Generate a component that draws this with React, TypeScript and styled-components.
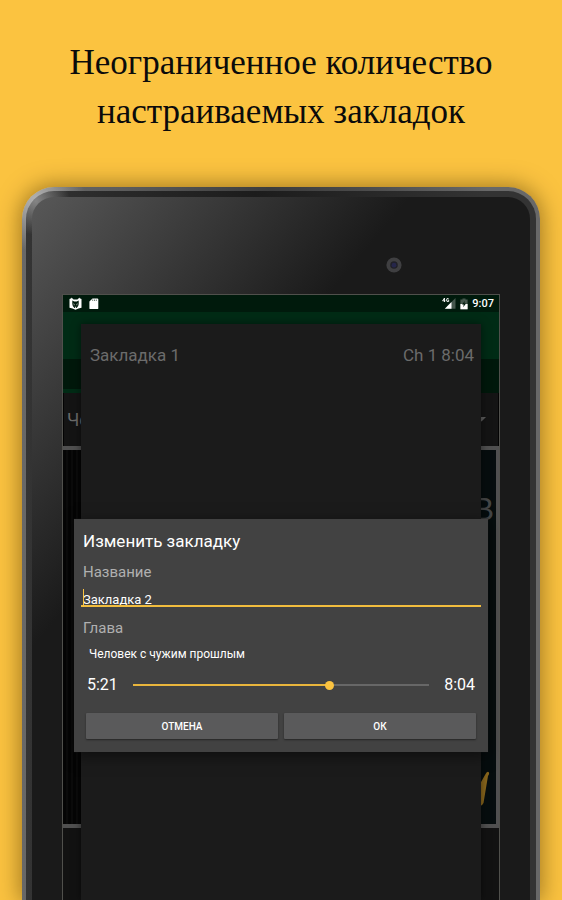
import React, { useState } from "react";
import styled, { createGlobalStyle } from "styled-components";

const GlobalStyle = createGlobalStyle`
  *, *::before, *::after { box-sizing: border-box; }
  body { margin: 0; background: #fbc340; }
  button, input, select { font-family: inherit; margin: 0; }
`;

const Page = styled.main`
  display: flex;
  flex-direction: column;
  min-height: 100vh;
  overflow: hidden;
  background: #fbc340;
  font-family: Roboto, "Noto Sans", sans-serif;
`;

const Headline = styled.h1`
  margin: 0;
  padding: 38px 24px 50px;
  color: #0b0b0b;
  font: 400 35px/49px "Liberation Serif", "Times New Roman", serif;
  text-align: center;

  span { display: block; }
`;

const Device = styled.section`
  flex: 1;
  display: flex;
  margin: 1px 22px 0;
  padding: 4px 4px 0;
  border-radius: 32px 32px 0 0;
  background:
    radial-gradient(circle at 14px 14px, #b4b4b4 0, rgba(150, 150, 150, 0) 50px),
    linear-gradient(to right, #686868 0, #5c5c5c 100px, #3c3c3c 48%, #4a4a4a 65%, #686868 90%);
  box-shadow: 0 0 22px 2px rgba(70, 45, 0, 0.5);
`;

const Rim = styled.div`
  flex: 1;
  display: flex;
  padding: 6px 6px 0;
  border-radius: 28px 28px 0 0;
  background:
    radial-gradient(circle at 10px 10px, #858585 0, rgba(80, 80, 80, 0) 34px),
    linear-gradient(to right, #343434 0, #2a2a2a 80px, #1c1c1c 45%, #333 90%);
`;

const Face = styled.div`
  flex: 1;
  display: flex;
  flex-direction: column;
  padding: 0 30px;
  border-radius: 22px 22px 0 0;
  background: linear-gradient(130deg, #585858 0, #1a1a1a 290px);
`;

const CameraStrip = styled.div`
  display: flex;
  align-items: center;
  height: 97px;
  padding: 38px 0 0 74%;
`;

const Screen = styled.div`
  flex: 1;
  position: relative;
  display: flex;
  flex-direction: column;
  overflow: hidden;
  min-height: 606px;
  border: 1px solid #50504c;
  border-bottom: 0;
  background: #121212;
`;

const StatusBar = styled.div`
  display: flex;
  align-items: center;
  justify-content: space-between;
  height: 17px;
  padding: 0 5px 0 6px;
  background: #001a0c;
  color: #fff;
  font-size: 11px;
  line-height: 17px;
  font-weight: 500;
`;

const StatusGroup = styled.div<{ $gap: number }>`
  display: flex;
  align-items: center;
  gap: ${(p) => p.$gap}px;
`;

const Spacer = styled.span`
  flex: 1;
`;

const AppBar = styled.div`
  height: 47px;
  background: #002b15;
`;

const TabBar = styled.div`
  height: 34px;
  background: linear-gradient(to right, #002b15 50%, transparent 50%) bottom / 100% 4px no-repeat #00180b;
`;

const ChapterPicker = styled.button`
  display: flex;
  align-items: center;
  justify-content: space-between;
  height: 53px;
  padding: 0 12px 0 3px;
  border: solid #030303;
  border-width: 0 1px;
  background: #141414;
  color: #6a6a6a;
  font-size: 18px;
`;

const Cover = styled.div`
  display: flex;
  height: 382px;
  border: solid #505050;
  border-width: 4px 3px 4px 0;
`;

const CoverSpine = styled.div`
  width: 40px;
  background: repeating-linear-gradient(to right, #050505 0 3px, #0b0b0b 3px 5px);
`;

const CoverArt = styled.div`
  flex: 1;
  display: flex;
  flex-direction: column;
  justify-content: space-between;
  align-items: flex-end;
  padding: 40px 2px 16px 0;
  background: #060d0e;
  color: #444647;
  font: 32px/38px "Liberation Sans", sans-serif;
`;

const BookmarkPanel = styled.section`
  position: absolute;
  inset: 29px 18px 0;
  padding: 19px 7px 0 9px;
  background: #1b1b1b;
  box-shadow: 0 0 8px rgba(0, 0, 0, 0.5);
`;

const BookmarkRow = styled.div`
  display: flex;
  color: #6b6b6b;
  font-size: 17px;
  line-height: 24px;
`;

const BookmarkTime = styled.span`
  margin-left: 4px;
`;

const Dialog = styled.form`
  position: absolute;
  inset: 224px 11px auto;
  padding: 9px 7px 13px;
  background: #424242;
  color: #fff;
  box-shadow: 0 4px 14px rgba(0, 0, 0, 0.5), 0 0 1px #222;
`;

const DialogTitle = styled.h2`
  margin: 0 2px 8px;
  font-size: 17px;
  line-height: 26px;
  font-weight: 400;
`;

const FieldLabel = styled.label`
  display: block;
  margin: 0 2px;
  color: #b0b0b0;
  font-size: 15px;
  line-height: 20px;
`;

const NameField = styled.div`
  position: relative;
  display: flex;
  margin: 7px 0 11px;

  &::before {
    content: "";
    position: absolute;
    left: 2px;
    top: 0;
    width: 1px;
    height: 18px;
    background: #fbc340;
  }
`;

const NameInput = styled.input`
  flex: 1;
  min-width: 0;
  height: 18px;
  padding: 4px 2px 0;
  border: 0;
  border-bottom: 2px solid #f2bd3e;
  outline: 0;
  background: transparent;
  color: #fff;
  font-size: 13px;
  line-height: 14px;
`;

const ChapterSelect = styled.select`
  display: block;
  width: 100%;
  height: 18px;
  margin: 7px 0 12px;
  padding: 0 8px;
  border: 0;
  outline: 0;
  appearance: none;
  background: transparent;
  color: #fff;
  font-size: 12px;
  line-height: 18px;
`;

const SeekRow = styled.div`
  display: flex;
  align-items: center;
  gap: 11px;
  height: 20px;
  padding: 0 6px;
  font-size: 16px;
  line-height: 20px;
`;

const Seek = styled.input`
  --fill: 0%;
  flex: 1;
  min-width: 0;
  height: 10px;
  appearance: none;
  outline: 0;
  background: linear-gradient(to right, #e9b53c var(--fill), #676767 var(--fill)) center / calc(100% - 8px) 2px no-repeat;

  &::-webkit-slider-thumb {
    appearance: none;
    width: 9px;
    height: 9px;
    border-radius: 50%;
    background: #fbc340;
  }
`;

const Actions = styled.div`
  display: grid;
  grid-template-columns: 1fr 1fr;
  gap: 6px;
  padding: 0 5px;
  margin-top: 18px;
`;

const ActionButton = styled.button`
  height: 26px;
  padding: 0;
  border: 0;
  border-radius: 1px;
  background: #5a5a5b;
  box-shadow: 0 1px 2px rgba(0, 0, 0, 0.45);
  color: #fff;
  font-size: 10px;
  font-weight: 500;
`;

const Camera = () => (
  <svg width="16" height="16" viewBox="0 0 16 16" aria-hidden="true">
    <circle cx="8" cy="8" r="7.6" fill="#3f3f41" />
    <circle cx="8" cy="8" r="3.8" fill="#202027" />
    <circle cx="8" cy="8.2" r="2.4" fill="#25264a" />
  </svg>
);

const BookIcon = () => (
  <svg width="13" height="13" viewBox="0 0 13 13" aria-hidden="true">
    <path d="M.5 2 2.400 1.200V.5L4.600 2.500H8.400L10.600.5V1.200L12.500 2V10.800L9.500 11.500 6.500 12.700 3.500 11.500.5 10.800Z" fill="#fff" />
    <path d="M3.300 3.600 5.200 4.400H7.800L9.700 3.600V7L9.200 9 7.600 11H5.400L3.800 9 3.300 7Z" fill="#001a0c" />
    <path d="M4.300 6 5.700 7.300 5 9ZM8.700 6 7.300 7.300 8 9Z" fill="#aab5ae" />
    <path d="M5.600 9.800H7.400L6.500 11.200Z" fill="#fff" />
  </svg>
);

const SdCardIcon = () => (
  <svg width="10" height="12" viewBox="0 0 10 12" aria-hidden="true">
    <path d="M3.500.5H8.400Q9.300.5 9.300 1.400V10.200Q9.300 11.100 8.400 11.100H1.300Q.4 11.100.4 10.200V3.600Z" fill="#fff" />
    <path d="M3.700 1.500V3M5.500 1.500V3M7.300 1.500V3" stroke="#4c5e54" strokeWidth=".8" />
  </svg>
);

const SignalIcon = () => (
  <svg width="14" height="13" viewBox="0 0 14 13" aria-hidden="true">
    <path d="M13.500 1V11.700H2.800Z" fill="#45574d" />
    <path d="M9.500 5V11.700H2.800Z" fill="#fff" />
    <path d="M2.500 1 .6 3.800H3.400M2.500 1V5M6.700 1.800Q4.500.6 4.500 3T6.700 4.500V3.200H5.700" fill="none" stroke="#fff" strokeWidth=".9" />
  </svg>
);

const BatteryIcon = () => (
  <svg width="8" height="12" viewBox="0 0 8 12" aria-hidden="true">
    <path d="M2.500.5H5.500V1.500H7.600V11.300H.4V1.500H2.500Z" fill="#45574d" />
    <path d="M.4 6H7.600V11.300H.4Z" fill="#fff" />
    <path d="M4.800 3 2 6.600H3.700L3.200 9.200 6 5.600H4.300Z" fill="#001a0c" />
  </svg>
);

const Caret = () => (
  <svg width="9" height="5" viewBox="0 0 9 5" aria-hidden="true">
    <path d="M0 0H9L4.500 4.500Z" fill="#5c5c5c" />
  </svg>
);

const BrushStroke = () => (
  <svg width="34" height="38" viewBox="0 0 34 38" aria-hidden="true">
    <path d="M6 34 10 12Q11 8 14 9L12 28 25 5Q27 1 28.500 2T28 6L23.500 33Q21.500 37 19 35L21 20 12 33Q8 37 6 34Z" fill="#8a671c" />
  </svg>
);

const formatTime = (s: number) => `${Math.floor(s / 60)}:${String(s % 60).padStart(2, "0")}`;

const DURATION = 484;

export default function App() {
  const [name, setName] = useState("Закладка 2");
  const [position, setPosition] = useState(321);

  return (
    <Page>
      <GlobalStyle />
      <Headline>
        <span>Неограниченное количество</span>
        <span>настраиваемых закладок</span>
      </Headline>
      <Device>
        <Rim>
          <Face>
            <CameraStrip>
              <Camera />
            </CameraStrip>
            <Screen>
              <StatusBar>
                <StatusGroup $gap={7}>
                  <BookIcon />
                  <SdCardIcon />
                </StatusGroup>
                <StatusGroup $gap={4}>
                  <SignalIcon />
                  <BatteryIcon />
                  <span>9:07</span>
                </StatusGroup>
              </StatusBar>
              <AppBar />
              <TabBar />
              <ChapterPicker type="button">
                <span>Че</span>
                <Caret />
              </ChapterPicker>
              <Cover>
                <CoverSpine />
                <CoverArt>
                  <span>В</span>
                  <BrushStroke />
                </CoverArt>
              </Cover>
              <BookmarkPanel>
                <BookmarkRow>
                  <span>Закладка 1</span>
                  <Spacer />
                  <span>Ch 1</span>
                  <BookmarkTime>8:04</BookmarkTime>
                </BookmarkRow>
              </BookmarkPanel>
              <Dialog onSubmit={(e) => e.preventDefault()}>
                <DialogTitle>Изменить закладку</DialogTitle>
                <FieldLabel htmlFor="name">Название</FieldLabel>
                <NameField>
                  <NameInput id="name" value={name} onChange={(e) => setName(e.target.value)} />
                </NameField>
                <FieldLabel htmlFor="chapter">Глава</FieldLabel>
                <ChapterSelect id="chapter">
                  <option>Человек с чужим прошлым</option>
                </ChapterSelect>
                <SeekRow>
                  <span>{formatTime(position)}</span>
                  <Seek
                    type="range"
                    aria-label="Глава"
                    min={0}
                    max={DURATION}
                    value={position}
                    onChange={(e) => setPosition(Number(e.target.value))}
                    style={{ "--fill": `${(position / DURATION) * 100}%` } as React.CSSProperties}
                  />
                  <span>{formatTime(DURATION)}</span>
                </SeekRow>
                <Actions>
                  <ActionButton type="button">ОТМЕНА</ActionButton>
                  <ActionButton type="submit">ОК</ActionButton>
                </Actions>
              </Dialog>
            </Screen>
          </Face>
        </Rim>
      </Device>
    </Page>
  );
}
